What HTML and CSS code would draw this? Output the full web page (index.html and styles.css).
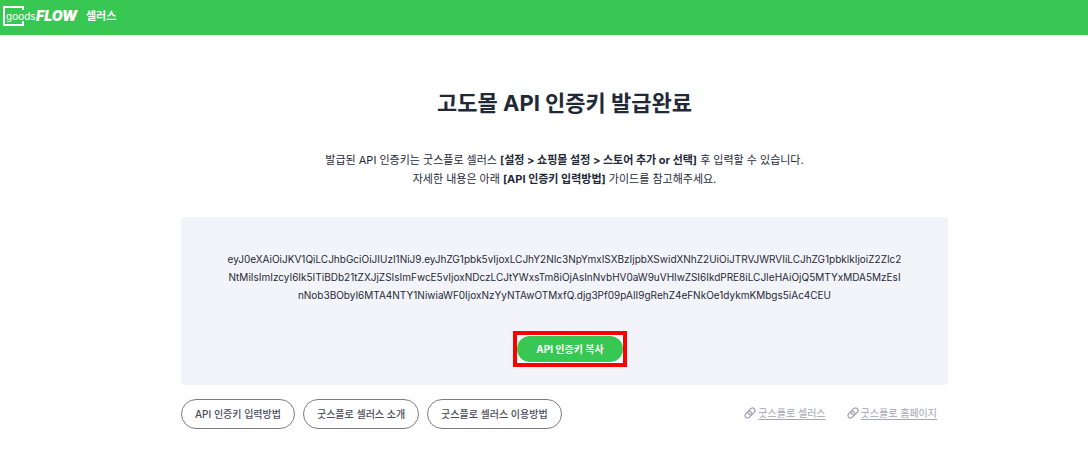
FILE: index.html
```html
<!DOCTYPE html>
<html lang="ko">
<head>
    <meta charset="UTF-8">
    <meta name="viewport" content="width=device-width, initial-scale=1.0">
    <title>고도몰 API 인증키 발급완료</title>
    <link rel="stylesheet" href="styles.css">
</head>
<body>

    <header class="header">
        <svg class="logo" width="76" height="24" viewBox="0 0 76 24" role="img" aria-label="goodsFLOW">
            <path d="M21 6V3H2v18h19v-4" fill="none" stroke="#fff" stroke-width="2"/>
            <text class="logo-goods" x="4" y="16">goods</text>
            <text class="logo-flow" x="34" y="17">FLOW</text>
        </svg>
        <span class="service">셀러스</span>
    </header>

    <main class="content">
        <h1>고도몰 API 인증키 발급완료</h1>

        <p class="guide">
            발급된 API 인증키는 굿스플로 셀러스 <strong>[설정 &gt; 쇼핑몰 설정 &gt; 스토어 추가 or 선택]</strong> 후 입력할 수 있습니다.<br>
            자세한 내용은 아래 <strong>[API 인증키 입력방법]</strong> 가이드를 참고해주세요.
        </p>

        <section class="key-box">
            <p class="key">eyJ0eXAiOiJKV1QiLCJhbGciOiJIUzI1NiJ9.eyJhZG1pbk5vIjoxLCJhY2NIc3NpYmxISXBzIjpbXSwidXNhZ2UiOiJTRVJWRVIiLCJhZG1pbklkIjoiZ2ZIc2<br>NtMiIsImIzcyI6Ik5ITiBDb21tZXJjZSIsImFwcE5vIjoxNDczLCJtYWxsTm8iOjAsInNvbHV0aW9uVHIwZSI6IkdPRE8iLCJIeHAiOjQ5MTYxMDA5MzEsI<br>nNob3BObyI6MTA4NTY1NiwiaWF0IjoxNzYyNTAwOTMxfQ.djg3Pf09pAII9gRehZ4eFNkOe1dykmKMbgs5iAc4CEU</p>
            <div class="copy-mark">
                <button type="button" class="copy-btn">API 인증키 복사</button>
            </div>
        </section>

        <div class="bottom">
            <div class="guides">
                <button type="button" class="guide-btn">API 인증키 입력방법</button>
                <button type="button" class="guide-btn">굿스플로 셀러스 소개</button>
                <button type="button" class="guide-btn">굿스플로 셀러스 이용방법</button>
            </div>
            <nav class="links">
                <a href="#sellers">
                    <svg width="12" height="12" viewBox="0 0 24 24" fill="none" stroke="currentColor" stroke-width="2.5" stroke-linecap="round" stroke-linejoin="round">
                        <path d="M10 14a5 5 0 0 0 7 0l4-4a5 5 0 0 0-7-7l-5 5a5 5 0 0 0 1 6"/>
                        <path d="M14 10a5 5 0 0 0-7 0l-4 4a5 5 0 0 0 7 7l5-5a5 5 0 0 0-1-6"/>
                    </svg>
                    <span>굿스플로 셀러스</span>
                </a>
                <a href="#home">
                    <svg width="12" height="12" viewBox="0 0 24 24" fill="none" stroke="currentColor" stroke-width="2.5" stroke-linecap="round" stroke-linejoin="round">
                        <path d="M10 14a5 5 0 0 0 7 0l4-4a5 5 0 0 0-7-7l-5 5a5 5 0 0 0 1 6"/>
                        <path d="M14 10a5 5 0 0 0-7 0l-4 4a5 5 0 0 0 7 7l5-5a5 5 0 0 0-1-6"/>
                    </svg>
                    <span>굿스플로 홈페이지</span>
                </a>
            </nav>
        </div>
    </main>

</body>
</html>
```
FILE: styles.css
```css
* {
    box-sizing: border-box;
}
body {
    margin: 0;
    font-family: Inter, "Noto Sans CJK KR", sans-serif;
    font-size: 11px;
    color: #1f2937;
    background: #fff;
}
.header {
    display: flex;
    align-items: center;
    gap: 8px;
    padding: 4px 2px 7px;
    background: #38c753;
    color: #fff;
}
.logo {
    fill: #fff;
}
.logo-goods {
    font-family: Inter, sans-serif;
    font-size: 10px;
}
.logo-flow {
    font-family: Inter, sans-serif;
    font-size: 14px;
    font-weight: 900;
    font-style: italic;
}
.service {
    font-size: 11px;
    font-weight: 700;
    line-height: 18px;
}
.content {
    margin: 0 140px 0 181px;
}
h1 {
    margin: 0;
    padding-top: 47px;
    font-size: 22px;
    font-weight: 700;
    line-height: 42px;
    text-align: center;
}
.guide {
    margin: 27px 0 0;
    font-size: 11px;
    line-height: 19px;
    text-align: center;
}
.guide strong {
    font-weight: 700;
}
.key-box {
    display: flex;
    flex-direction: column;
    align-items: center;
    margin-top: 28px;
    padding: 33px 0 18px;
    background: #f3f4f9;
    border-radius: 3px;
}
.key {
    margin: 0;
    font-size: 10px;
    line-height: 18px;
    text-align: center;
    white-space: nowrap;
}
.copy-mark {
    display: flex;
    margin: 27px 0 0 11px;
    padding: 1px 0;
    background: #fff;
    border: 4px solid #f00;
}
.copy-btn {
    padding: 0 19px;
    border: 0;
    border-radius: 13px;
    background: #38c753;
    color: #fff;
    font-family: inherit;
    font-size: 10px;
    font-weight: 700;
    line-height: 26px;
    cursor: pointer;
}
.bottom {
    display: flex;
    justify-content: space-between;
    padding: 14px 11px 34px 0;
}
.guides {
    display: flex;
    gap: 8px;
}
.guide-btn {
    padding: 0 13px;
    border: 1px solid #7b7b88;
    border-radius: 15px;
    background: #fff;
    color: #4a4a58;
    font-family: inherit;
    font-size: 10px;
    font-weight: 500;
    line-height: 28px;
    cursor: pointer;
}
.links {
    display: flex;
    gap: 21px;
}
.links a {
    display: flex;
    align-items: center;
    align-self: flex-start;
    gap: 2px;
    padding-top: 5px;
    color: #a5a5b5;
    font-size: 10px;
    line-height: 18px;
    text-decoration: none;
}
.links span {
    text-decoration: underline;
    text-underline-offset: 2px;
}
```
